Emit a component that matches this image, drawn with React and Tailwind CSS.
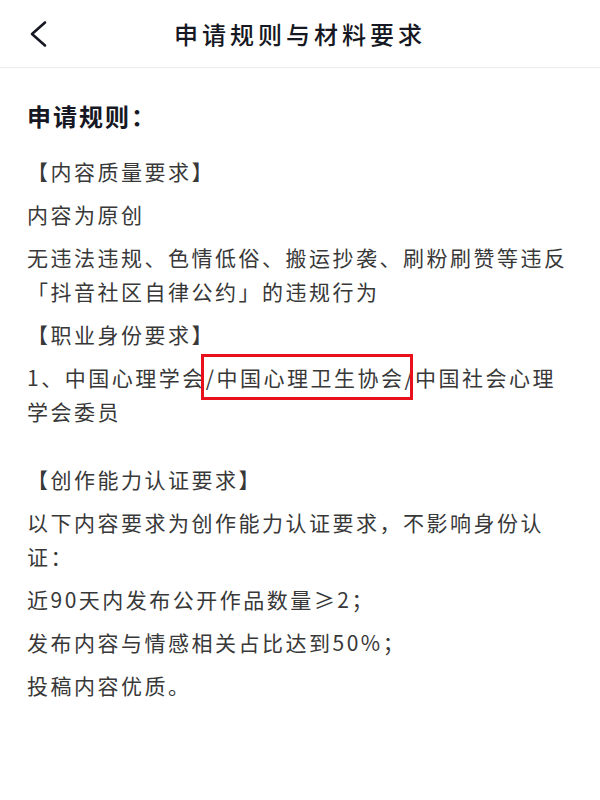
import React from "react";

const cjk = { fontFamily: '"Noto Sans CJK SC", "Noto Sans", sans-serif' };

function Para({ children, className = "" }) {
  return <p className={`text-[21px] leading-[34px] tracking-[2.5px] text-[#383838] ${className}`}>{children}</p>;
}

export default function App() {
  return (
    <div className="w-[600px] h-[800px] bg-white" style={cjk}>
      <div className="h-[68px] border-b border-[#ececec] grid grid-cols-[1fr_auto_1fr] items-center">
        <div className="pl-[28px] flex items-center">
          <svg width="20" height="28" viewBox="0 0 20 28" fill="none">
            <path d="M17 2.5 L4 14 L17 25.5" stroke="#161823" strokeWidth="2.6" strokeLinecap="round" strokeLinejoin="round" />
          </svg>
        </div>
        <h1 className="text-[24px] font-medium tracking-[4px] text-[#161823]">申请规则与材料要求</h1>
        <div />
      </div>

      <div className="px-[27px] pt-[31px]">
        <h2 className="text-[24px] leading-[34px] font-semibold tracking-[2px] text-[#161823] mb-[21px]">申请规则：</h2>

        <div className="flex flex-col gap-[9px]">
          <Para>【内容质量要求】</Para>
          <Para>内容为原创</Para>
          <Para>无违法违规、色情低俗、搬运抄袭、刷粉刷赞等违反「抖音社区自律公约」的违规行为</Para>
          <Para>【职业身份要求】</Para>
          <Para>
            1、中国心理学会
            <span className="relative">
              /中国心理卫生协会
              <span className="absolute -left-[5px] -right-[9px] -top-[8px] -bottom-[8px] border-[3.5px] border-[#e8101a]" />
            </span>
            /中国社会心理学会委员
          </Para>
          <Para className="mt-[25px]">【创作能力认证要求】</Para>
          <Para>以下内容要求为创作能力认证要求，不影响身份认证：</Para>
          <Para>近90天内发布公开作品数量≥2；</Para>
          <Para>发布内容与情感相关占比达到50%；</Para>
          <Para>投稿内容优质。</Para>
        </div>
      </div>
    </div>
  );
}
